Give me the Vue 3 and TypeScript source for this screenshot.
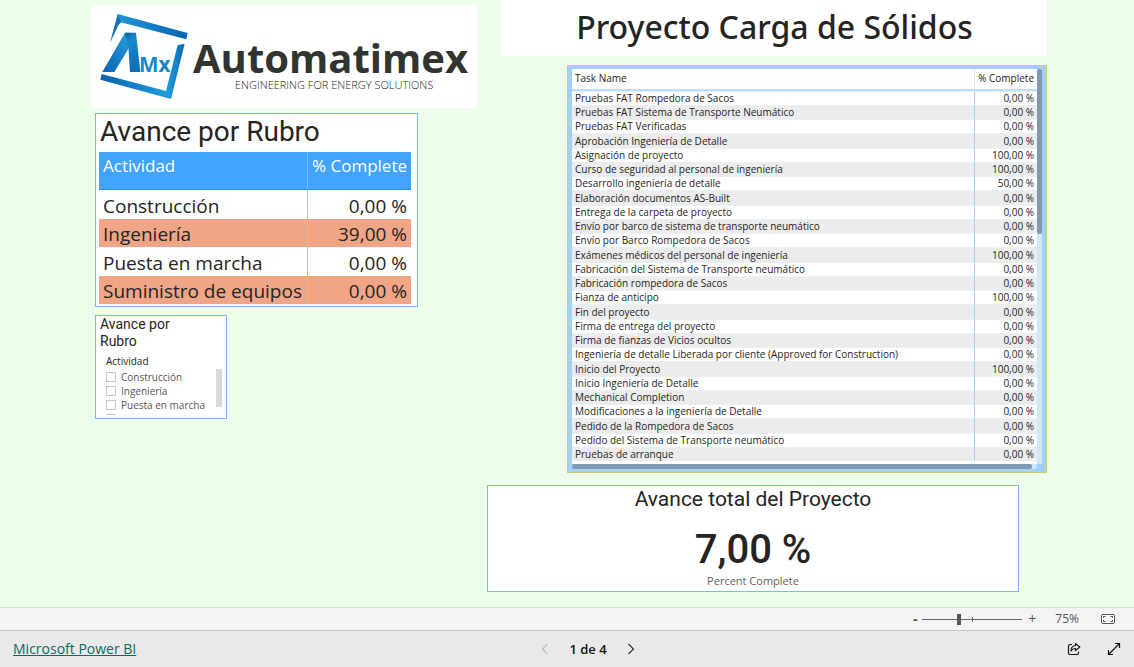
<script setup lang="ts">
import { ref } from 'vue'

interface Row {
  name: string
  complete: string
}

const areas: Row[] = [
  { name: 'Construcción', complete: '0,00 %' },
  { name: 'Ingeniería', complete: '39,00 %' },
  { name: 'Puesta en marcha', complete: '0,00 %' },
  { name: 'Suministro de equipos', complete: '0,00 %' },
]

const tasks: Row[] = [
  { name: 'Pruebas FAT Rompedora de Sacos', complete: '0,00 %' },
  { name: 'Pruebas FAT Sistema de Transporte Neumático', complete: '0,00 %' },
  { name: 'Pruebas FAT Verificadas', complete: '0,00 %' },
  { name: 'Aprobación Ingeniería de Detalle', complete: '0,00 %' },
  { name: 'Asignación de proyecto', complete: '100,00 %' },
  { name: 'Curso de seguridad al personal de ingeniería', complete: '100,00 %' },
  { name: 'Desarrollo ingeniería de detalle', complete: '50,00 %' },
  { name: 'Elaboración documentos AS-Built', complete: '0,00 %' },
  { name: 'Entrega de la carpeta de proyecto', complete: '0,00 %' },
  { name: 'Envío por barco de sistema de transporte neumático', complete: '0,00 %' },
  { name: 'Envío por Barco Rompedora de Sacos', complete: '0,00 %' },
  { name: 'Exámenes médicos del personal de ingeniería', complete: '100,00 %' },
  { name: 'Fabricación del Sistema de Transporte neumático', complete: '0,00 %' },
  { name: 'Fabricación rompedora de Sacos', complete: '0,00 %' },
  { name: 'Fianza de anticipo', complete: '100,00 %' },
  { name: 'Fin del proyecto', complete: '0,00 %' },
  { name: 'Firma de entrega del proyecto', complete: '0,00 %' },
  { name: 'Firma de fianzas de Vicios ocultos', complete: '0,00 %' },
  { name: 'Ingeniería de detalle Liberada por cliente (Approved for Construction)', complete: '0,00 %' },
  { name: 'Inicio del Proyecto', complete: '100,00 %' },
  { name: 'Inicio Ingeniería de Detalle', complete: '0,00 %' },
  { name: 'Mechanical Completion', complete: '0,00 %' },
  { name: 'Modificaciones a la ingeniería de Detalle', complete: '0,00 %' },
  { name: 'Pedido de la Rompedora de Sacos', complete: '0,00 %' },
  { name: 'Pedido del Sistema de Transporte neumático', complete: '0,00 %' },
  { name: 'Pruebas de arranque', complete: '0,00 %' },
]

const selected = ref<string[]>([])
const zoom = ref(36)
</script>

<template>
  <div class="app">
    <main class="canvas">
      <div class="left">
        <div class="logo">
          <svg class="mark" viewBox="39 39 273 261" role="img" aria-label="AMx">
            <defs>
              <linearGradient id="bar" x1="0" y1="0" x2="1" y2="0">
                <stop offset="0" stop-color="#2196d6" />
                <stop offset="1" stop-color="#0763b2" />
              </linearGradient>
              <linearGradient id="corner" x1="0" y1="0.5" x2="1" y2="0.5">
                <stop offset="0" stop-color="#0763b2" />
                <stop offset="0.8" stop-color="#1f9ada" />
                <stop offset="1" stop-color="#0a67b5" />
              </linearGradient>
              <linearGradient id="leg" x1="1" y1="0" x2="0" y2="1">
                <stop offset="0" stop-color="#27a0dc" />
                <stop offset="1" stop-color="#0763b2" />
              </linearGradient>
              <linearGradient id="stem" x1="0" y1="0" x2="0.3" y2="1">
                <stop offset="0" stop-color="#0a5c9e" />
                <stop offset="0.3" stop-color="#1789cc" />
                <stop offset="1" stop-color="#0a70bb" />
              </linearGradient>
            </defs>
            <path d="M98 42 308 99 304 118 107 67 98 66Z" fill="url(#bar)" />
            <path d="M98 42 109 66 101 74 75 128Z" fill="#1173b7" />
            <path d="M278 135 299 131 258 297 46 239 50 222 243 273Z" fill="url(#corner)" />
            <path d="M52 216 120 98 136 98 134 140 88 216Z" fill="url(#leg)" />
            <path d="M120 98 153 98 166 216 135 216 130 140Z" fill="url(#stem)" />
            <text x="162" y="215" class="mark-text">Mx</text>
          </svg>
          <div class="brand">
            <span class="brand-name">Automatimex</span>
            <span class="brand-line">ENGINEERING FOR ENERGY SOLUTIONS</span>
          </div>
        </div>

        <section class="card areas">
          <h2>Avance por Rubro</h2>
          <table>
            <thead>
              <tr><th scope="col">Actividad</th><th scope="col">% Complete</th></tr>
            </thead>
            <tbody>
              <tr v-for="row in areas" :key="row.name">
                <td>{{ row.name }}</td>
                <td>{{ row.complete }}</td>
              </tr>
            </tbody>
          </table>
        </section>

        <section class="card slicer">
          <h2>Avance por Rubro</h2>
          <h3>Actividad</h3>
          <div class="options">
            <div class="option-list">
              <label v-for="row in areas" :key="row.name">
                <input v-model="selected" type="checkbox" :value="row.name" />
                <span>{{ row.name }}</span>
              </label>
            </div>
            <div class="option-thumb"></div>
          </div>
        </section>
      </div>

      <div class="right">
        <h1>Proyecto Carga de Sólidos</h1>

        <section class="tasks">
          <div class="tasks-body">
            <table>
              <thead>
                <tr><th scope="col">Task Name</th><th scope="col">% Complete</th></tr>
              </thead>
              <tbody>
                <tr v-for="row in tasks" :key="row.name">
                  <td>{{ row.name }}</td>
                  <td>{{ row.complete }}</td>
                </tr>
              </tbody>
            </table>
            <div class="vbar"><div class="vthumb"></div></div>
          </div>
          <div class="hbar"><div class="hthumb"></div></div>
        </section>

        <section class="card total">
          <h2>Avance total del Proyecto</h2>
          <p class="value">7,00 %</p>
          <p class="caption">Percent Complete</p>
        </section>
      </div>
    </main>

    <div class="zoombar">
      <button type="button" class="step minus" aria-label="Alejar">-</button>
      <input v-model.number="zoom" type="range" min="0" max="100" aria-label="Zoom" />
      <button type="button" class="step" aria-label="Acercar">+</button>
      <span class="percent">75%</span>
      <button type="button" class="icon" aria-label="Ajustar a la página">
        <svg width="16" height="12" viewBox="0 0 16 12" fill="none" stroke="#555" stroke-width="1">
          <rect x="1.5" y="1.5" width="13" height="9" rx="1" />
          <path d="M5.5 3.5H3.5V5M10.5 3.5H12.5V5M3.5 7V8.5H5.5M12.5 7V8.5H10.5" />
        </svg>
      </button>
    </div>

    <footer class="footer">
      <a href="#">Microsoft Power BI</a>
      <nav class="pager" aria-label="Páginas">
        <button type="button" class="icon" aria-label="Anterior" disabled>
          <svg width="8" height="12" viewBox="0 0 8 12" fill="none" stroke="#bdbdbd" stroke-width="1.2"><path d="M6.5 1 1.5 6l5 5" /></svg>
        </button>
        <span>1 de 4</span>
        <button type="button" class="icon" aria-label="Siguiente">
          <svg width="8" height="12" viewBox="0 0 8 12" fill="none" stroke="#333" stroke-width="1.2"><path d="M1.5 1l5 5-5 5" /></svg>
        </button>
      </nav>
      <div class="actions">
        <button type="button" class="icon" aria-label="Compartir">
          <svg width="14" height="14" viewBox="0 0 14 14" fill="none" stroke="#1a1a1a" stroke-width="1.2" stroke-linejoin="round">
            <path d="M5 2.5H3A1.5 1.5 0 0 0 1.5 4v7A1.5 1.5 0 0 0 3 12.5h7A1.5 1.5 0 0 0 11.5 11V9.5" />
            <path d="M8.5 1.5 12.8 5 8.5 8.5v-2C6.5 6.5 5 7.2 4 9c.1-3 1.800-5.300 4.500-5.500z" />
          </svg>
        </button>
        <button type="button" class="icon" aria-label="Pantalla completa">
          <svg width="14" height="14" viewBox="0 0 14 14" fill="none" stroke="#111" stroke-width="1.2">
            <path d="M1.5 12.5 12.5 1.5M8 1.5h4.500V6M1.5 8v4.500H6" />
          </svg>
        </button>
      </div>
    </footer>
  </div>
</template>

<style>
body {
  margin: 0;
}
</style>

<style scoped>
.app {
  min-height: 100vh;
  display: flex;
  flex-direction: column;
  background: #edffeb;
  color: #252423;
  font-family: "Open Sans", "Noto Sans", sans-serif;
}

h1, h2, h3, p {
  margin: 0;
  font-weight: 400;
}

button {
  border: 0;
  padding: 0;
  background: none;
  font: inherit;
  color: inherit;
}

table {
  border-collapse: separate;
  border-spacing: 0;
  width: 100%;
}

th, td {
  box-sizing: border-box;
  padding: 0;
  font-weight: 400;
  text-align: left;
  white-space: nowrap;
}

th:last-child, td:last-child {
  text-align: right;
}

.canvas {
  flex: 1;
  display: grid;
  grid-template-columns: minmax(0, 386fr) minmax(0, 560fr);
  column-gap: 10px;
  padding: 0 87px 0 91px;
}

.left {
  padding-top: 5px;
}

.card {
  box-sizing: border-box;
  background: #fff;
  border: 1px solid #74b9fb;
}

.card h2 {
  font-family: Roboto, sans-serif;
}

.logo {
  display: flex;
  align-items: flex-start;
  background: #fff;
  padding: 8px 7px;
  height: 87px;
}

.mark {
  width: 91px;
  height: 87px;
  flex: none;
}

.mark-text {
  font: 700 62px "Open Sans", sans-serif;
  fill: #1787c8;
}

.brand {
  display: flex;
  flex-direction: column;
  margin-left: 4px;
  padding-top: 25px;
}

.brand-name {
  font-size: 40px;
  line-height: 40px;
  font-weight: 700;
  color: #30352f;
}

.brand-line {
  margin-left: 42px;
  font-size: 11px;
  font-weight: 300;
  line-height: 14px;
  color: #222;
  white-space: nowrap;
}

.areas {
  width: 323px;
  margin: 5px 0 0 4px;
  padding: 3px 6px 2px 3px;
}

.areas h2 {
  padding-left: 1px;
  font-size: 28px;
  line-height: 30px;
  margin-bottom: 5px;
}

.areas th {
  height: 38px;
  padding: 0 4px;
  background: #41a4ff;
  border-bottom: 1px solid #258ff0;
  color: #fff;
  font-size: 17px;
  line-height: 28px;
  vertical-align: top;
}

.areas th:first-child {
  border-right: 1px solid #72bbff;
}

.areas td {
  height: 28px;
  padding: 2px 4px 0;
  font-size: 19px;
  line-height: 26px;
}

.areas tr:nth-child(odd) td {
  height: 29px;
}

.areas td:first-child {
  border-right: 1px solid #9ccbf7;
}

.areas tbody tr:nth-child(even) td {
  background: #f0a686;
}

.slicer {
  width: 132px;
  height: 104px;
  margin: 8px 0 0 4px;
  padding: 0 4px;
}

.slicer h2 {
  padding-right: 24px;
  font-size: 14px;
  line-height: 17px;
}

.slicer h3 {
  margin: 4px 0 0 6px;
  font-size: 10px;
  line-height: 14px;
}

.options {
  display: flex;
  align-items: flex-start;
  margin-top: 1px;
  padding-left: 6px;
  height: 46px;
  overflow: hidden;
}

.option-list {
  flex: 1;
  min-width: 0;
  padding-top: 1px;
  overflow: hidden;
}

.option-list label {
  display: flex;
  align-items: center;
  gap: 5px;
  height: 14px;
  font-size: 10px;
  line-height: 14px;
  color: #555;
  white-space: nowrap;
}

.option-list input {
  appearance: none;
  flex: none;
  box-sizing: border-box;
  width: 10px;
  height: 10px;
  margin: 0;
  border: 1px solid #c8c8c8;
  background: #fff;
}

.option-list input:checked {
  background: #555;
}

.option-thumb {
  flex: none;
  width: 6px;
  height: 38px;
  background: #d8d8d8;
}

h1 {
  margin-left: 15px;
  height: 56px;
  background: #fff;
  font-family: "Noto Sans", sans-serif;
  font-size: 32px;
  font-weight: 500;
  line-height: 54px;
  text-align: center;
}

.tasks {
  margin: 9px 0 0 80px;
  padding: 3px 4px;
  border: 1px solid #d5c96a;
  background: #a0d1ff;
}

.tasks-body {
  display: flex;
  height: 395px;
  overflow: hidden;
  background: #fff;
}

.tasks table {
  flex: 1;
  align-self: flex-start;
  table-layout: fixed;
  font-size: 10px;
  line-height: 13px;
}

.tasks th {
  height: 22px;
  padding: 0 3px 1px;
  border-bottom: 2px solid #bcdefc;
}

.tasks th:last-child {
  width: 62px;
}

.tasks th:first-child {
  border-right: 1px solid #dcebfa;
}

.tasks td {
  height: 14px;
  padding: 0 3px;
  border-top: 1px solid #e7f1fb;
}

.tasks tbody tr:nth-child(4n) td {
  height: 15px;
}

.tasks td:first-child {
  border-right: 1px solid #9fd0ff;
}

.tasks tbody tr:nth-child(even) td {
  background: #ececec;
}

.vbar {
  flex: none;
  width: 5px;
  background: #cfe7ff;
}

.vthumb {
  height: 165px;
  border-radius: 2px;
  background: #8099b3;
}

.hbar {
  height: 5px;
  margin-right: 5px;
  border-radius: 2px;
  background: #cfe7ff;
}

.hthumb {
  width: 99%;
  height: 5px;
  border-radius: 2px;
  background: #8099b3;
}

.total {
  margin: 12px 28px 14px 0;
  height: 107px;
  text-align: center;
}

.total h2 {
  font-size: 21px;
  line-height: 26px;
}

.value {
  margin-top: 16px;
  font-family: Roboto, sans-serif;
  font-size: 40px;
  font-weight: 500;
  line-height: 44px;
}

.caption {
  font-size: 11px;
  line-height: 18px;
  color: #605e5c;
}

.zoombar {
  display: flex;
  align-items: center;
  justify-content: flex-end;
  height: 22px;
  padding-right: 18px;
  background: #f4f4f4;
  border-top: 1px solid #dcdcdc;
  color: #555;
}

.step {
  width: 10px;
  font-size: 14px;
  line-height: 16px;
}

.minus {
  font-weight: 700;
}

.zoombar input {
  appearance: none;
  width: 100px;
  height: 12px;
  margin: 0 5px 0 2px;
  background:
    linear-gradient(#666, #666) 50% 50% / 1px 5px no-repeat,
    linear-gradient(#666, #666) 50% 50% / 100% 1px no-repeat;
}

.zoombar input::-webkit-slider-thumb {
  appearance: none;
  width: 4px;
  height: 11px;
  background: #555;
}

.percent {
  margin: 0 21px 0 18px;
  font-size: 12px;
  line-height: 16px;
}

.icon {
  display: flex;
}

.footer {
  display: grid;
  grid-template-columns: 1fr auto 1fr;
  align-items: center;
  height: 36px;
  padding: 0 13px;
  background: #e9e9e9;
  border-top: 1px solid #c8c8c8;
  font-size: 13px;
  line-height: 20px;
}

.footer a {
  justify-self: start;
  color: #0b6a5e;
  font-size: 14px;
}

.pager {
  display: flex;
  align-items: center;
  gap: 20px;
  margin-left: 42px;
  color: #111;
  font-weight: 600;
}

.actions {
  justify-self: end;
  display: flex;
  gap: 26px;
}
</style>
